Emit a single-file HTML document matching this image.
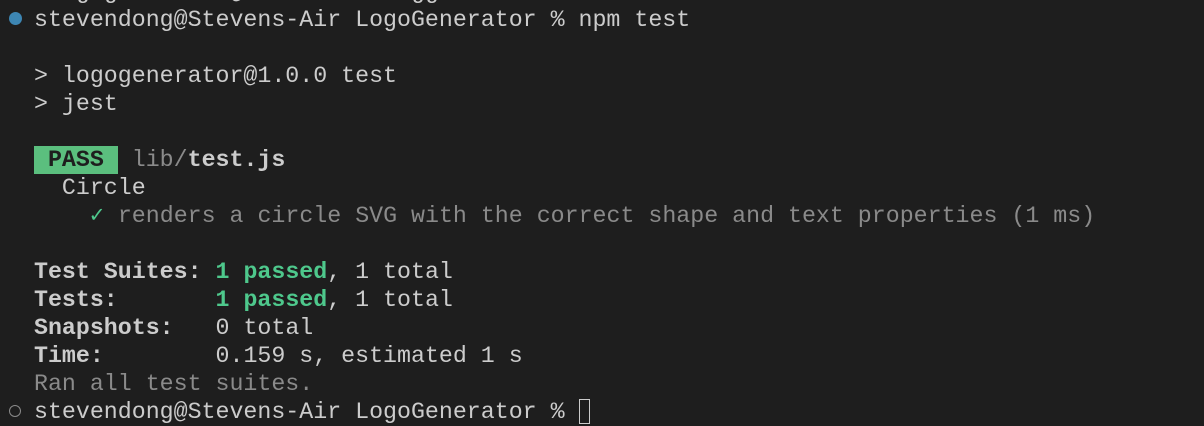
<!DOCTYPE html>
<html><head><meta charset="utf-8"><style>
html,body{margin:0;padding:0;background:#1e1e1e;width:1204px;height:426px;overflow:hidden}
.t{position:absolute;left:34px;top:6px;font-family:"Liberation Mono",monospace;font-size:23.27px;line-height:28px;color:#cccccc;white-space:pre}
.g{color:#4ec88c;font-weight:bold}
.b{font-weight:bold}
.d{color:#8a8a8a}
.pass{background:#5bbf7e;color:#1e1e1e;font-weight:bold;display:inline-block;height:28px}
.ck{color:#4ec88c}
.dot{position:absolute;left:9px;top:12px;width:13px;height:13px;border-radius:50%;background:#3d86b3}
.odot{position:absolute;left:9px;top:405px;width:10px;height:10px;border-radius:50%;border:1.5px solid #8a8a8a}
.cur{display:inline-block;width:11px;height:25px;border:1.5px solid #cccccc;vertical-align:-6px;box-sizing:border-box}
.top{position:absolute;left:34px;top:-22px;font-family:"Liberation Mono",monospace;font-size:23.27px;line-height:28px;color:#cccccc;white-space:pre}
</style></head><body>
<div class="top">  ogogenerator@1.0.0 test agg</div>
<div class="dot"></div>
<div class="odot"></div>
<div class="t">stevendong@Stevens-Air LogoGenerator % npm test

&gt; logogenerator@1.0.0 test
&gt; jest

<span class="pass"> PASS </span> <span class="d">lib/</span><span class="b">test.js</span>
  Circle
    <span class="ck">✓</span> <span class="d">renders a circle SVG with the correct shape and text properties (1 ms)</span>

<span class="b">Test Suites: </span><span class="g">1 passed</span>, 1 total
<span class="b">Tests:       </span><span class="g">1 passed</span>, 1 total
<span class="b">Snapshots:   </span>0 total
<span class="b">Time:        </span>0.159 s, estimated 1 s
<span class="d">Ran all test suites.</span>
stevendong@Stevens-Air LogoGenerator % <span class="cur"></span></div>
</body></html>
